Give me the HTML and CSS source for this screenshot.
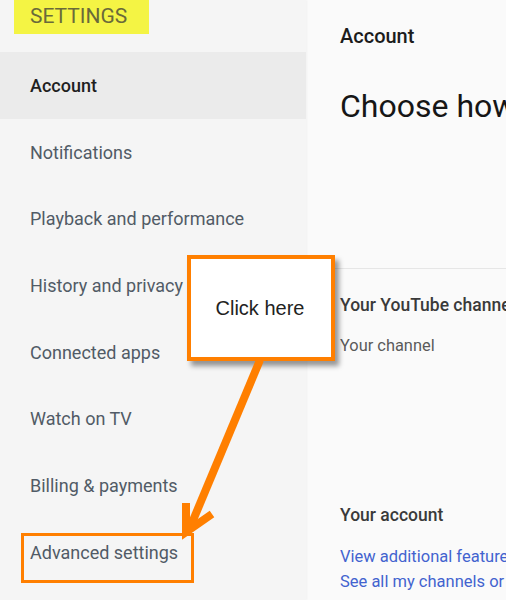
FILE: index.html
```html
<!DOCTYPE html>
<html>
<head>
<meta charset="utf-8">
<link rel="stylesheet" href="styles.css">
</head>
<body>
<div class="page">
  <aside class="sidebar">
    <div class="head"><span class="settings">SETTINGS</span></div>
    <nav class="menu">
      <div class="item active">Account</div>
      <div class="item">Notifications</div>
      <div class="item">Playback and performance</div>
      <div class="item">History and privacy</div>
      <div class="item">Connected apps</div>
      <div class="item">Watch on TV</div>
      <div class="item">Billing &amp; payments</div>
      <div class="item">Advanced settings</div>
    </nav>
  </aside>
  <main class="main">
    <div class="title">Account</div>
    <div class="big">Choose how</div>
    <div class="section">
      <div class="sec-title">Your YouTube channel</div>
      <div class="sec-sub">Your channel</div>
    </div>
    <div class="account">
      <div class="sec-title">Your account</div>
      <div class="link l1">View additional features</div>
      <div class="link">See all my channels or</div>
    </div>
  </main>
  <div class="callout">Click here</div>
  <div class="hl-box"></div>
  <svg class="arrow" width="506" height="600" viewBox="0 0 506 600">
    <g stroke="#ff7f00" stroke-width="8" fill="none" stroke-linecap="butt">
      <line x1="260" y1="360" x2="189" y2="530"/>
      <polyline points="186,503 186,532 212,514"/>
    </g>
  </svg>
</div>
</body>
</html>
```
FILE: styles.css
```css
html, body { margin: 0; padding: 0; }
body { font-family: Roboto, "Noto Sans", sans-serif; background: #fafafa; }
.page { position: relative; width: 506px; height: 600px; overflow: hidden; display: flex; }
.sidebar { width: 306px; flex: none; background: #f5f5f5; box-shadow: 1px 0 2px rgba(0,0,0,0.04); }
.head { height: 52px; padding-left: 14px; }
.settings { display: inline-block; background: #f4f444; color: #6a6a3a; font-size: 21px; height: 34px; line-height: 33px; padding: 0 22px 0 16px; }
.menu { display: flex; flex-direction: column; }
.item { height: 66.7px; line-height: 68px; padding-left: 30px; font-size: 18px; color: #515b66; white-space: nowrap; }
.item.active { background: #ebebeb; color: #1f1f1f; font-weight: 500; }
.main { flex: 1; padding-left: 34px; overflow: hidden; white-space: nowrap; }
.title { margin-top: 24px; font-size: 20px; font-weight: 500; color: #1c1c1c; line-height: 24px; }
.big { margin-top: 38px; font-size: 32px; color: #161616; line-height: 40px; }
.section { margin-top: 142px; border-top: 1px solid #e6e6e6; margin-left: -6px; padding-left: 6px; padding-top: 24px; }
.sec-title { font-size: 17.5px; font-weight: 500; color: #3a3a3a; line-height: 24px; }
.sec-sub { margin-top: 19px; font-size: 16.4px; color: #5a5a5a; line-height: 20px; }
.account { margin-top: 147px; }
.link { font-size: 16.5px; color: #4263cf; line-height: 25px; }
.l1 { margin-top: 16.5px; }
.callout { position: absolute; left: 187px; top: 255px; width: 138px; height: 98px; border: 4px solid #ff7f00; background: #fff; box-shadow: 4px 5px 5px rgba(0,0,0,0.4); font-family: "Liberation Sans", Arial, sans-serif; font-size: 20px; color: #222; display: flex; align-items: center; justify-content: center; padding-right: 2px; box-sizing: content-box; }
.hl-box { position: absolute; left: 21px; top: 533px; width: 167px; height: 44px; border: 3px solid #ff7f00; }
.arrow { position: absolute; left: 0; top: 0; pointer-events: none; }
```
